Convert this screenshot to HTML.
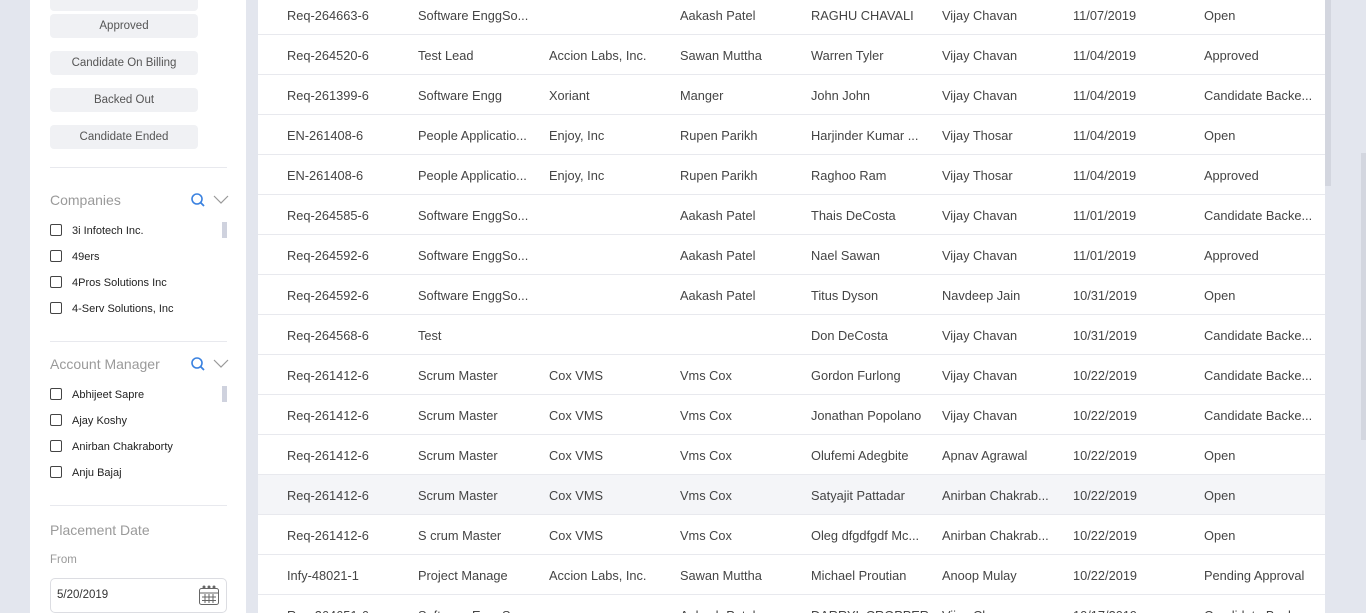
<!DOCTYPE html>
<html style="width:1366px;height:613px;overflow:hidden"><head><style>
*{margin:0;padding:0;box-sizing:border-box}
body{width:1366px;height:613px;overflow:hidden;background:#e3e6ee;font-family:"Liberation Sans",sans-serif;position:relative}
.side{position:absolute;left:30px;top:0;width:216px;height:613px;background:#fff}
.btn{position:absolute;left:20px;width:148px;height:24px;background:#f0f1f4;border-radius:4px;font-size:11.5px;color:#555;text-align:center;line-height:24px}
.hr{position:absolute;left:20px;width:177px;height:1px;background:#e8e9ee}
.h{position:absolute;left:20px;font-size:14px;color:#9a9a9a}
.cb{position:absolute;left:20px;font-size:11px;color:#222;line-height:16px}
.cb i{display:inline-block;width:12px;height:12px;border:1.3px solid #444;border-radius:2px;vertical-align:-2px;margin-right:10px}
.thumb{position:absolute;left:192px;width:5px;height:16px;background:#cfd2de}
.tbl{position:absolute;left:258px;top:0;width:1067px;height:613px;background:#fff;overflow:hidden}
.row{position:absolute;left:0;width:1067px;height:40px;border-bottom:1px solid #e8e9ee;font-size:12.8px;color:#444}
.row span{position:absolute;top:13px;white-space:nowrap}
</style></head><body>
<div class="side">
<div class="btn" style="top:-13px"></div>
<div class="btn" style="top:14px">Approved</div>
<div class="btn" style="top:51px">Candidate On Billing</div>
<div class="btn" style="top:88px">Backed Out</div>
<div class="btn" style="top:125px">Candidate Ended</div>
<div class="hr" style="top:167px"></div>
<div class="h" style="top:192px">Companies</div>
<svg style="position:absolute;left:160px;top:192px" width="40" height="18"><circle cx="7" cy="7" r="5" fill="none" stroke="#3b82e0" stroke-width="1.6"/><line x1="10.5" y1="10.5" x2="14" y2="14" stroke="#3b82e0" stroke-width="1.8"/><polyline points="24,4 31,11 38,4" fill="none" stroke="#999" stroke-width="1.2"/></svg>
<div class="thumb" style="top:222px"></div>
<div class="cb" style="top:223px"><i></i>3i Infotech Inc.</div>
<div class="cb" style="top:249px"><i></i>49ers</div>
<div class="cb" style="top:275px"><i></i>4Pros Solutions Inc</div>
<div class="cb" style="top:301px"><i></i>4-Serv Solutions, Inc</div>
<div class="hr" style="top:341px"></div>
<div class="h" style="top:356px">Account Manager</div>
<svg style="position:absolute;left:160px;top:356px" width="40" height="18"><circle cx="7" cy="7" r="5" fill="none" stroke="#3b82e0" stroke-width="1.6"/><line x1="10.5" y1="10.5" x2="14" y2="14" stroke="#3b82e0" stroke-width="1.8"/><polyline points="24,4 31,11 38,4" fill="none" stroke="#999" stroke-width="1.2"/></svg>
<div class="thumb" style="top:386px"></div>
<div class="cb" style="top:387px"><i></i>Abhijeet Sapre</div>
<div class="cb" style="top:413px"><i></i>Ajay Koshy</div>
<div class="cb" style="top:439px"><i></i>Anirban Chakraborty</div>
<div class="cb" style="top:465px"><i></i>Anju Bajaj</div>
<div class="hr" style="top:505px"></div>
<div class="h" style="top:522px">Placement Date</div>
<div style="position:absolute;left:20px;top:554px;font-size:11.5px;color:#999">From</div>
<div style="position:absolute;left:20px;top:578px;width:177px;height:35px;border:1px solid #dcdde2;border-radius:5px;font-size:11.5px;color:#333;padding:10px 0 0 6px">5/20/2019
<svg style="position:absolute;right:6px;top:5px" width="22" height="22"><rect x="1.5" y="4.5" width="19" height="16" rx="2" fill="none" stroke="#666"/><line x1="1.5" y1="9" x2="20.5" y2="9" stroke="#666"/><g fill="#666"><circle cx="6" cy="3" r="1.5"/><circle cx="11" cy="3" r="1.5"/><circle cx="16" cy="3" r="1.5"/></g><g stroke="#666"><line x1="4" y1="13" x2="18" y2="13"/><line x1="4" y1="16.5" x2="18" y2="16.5"/><line x1="7" y1="10" x2="7" y2="19"/><line x1="11" y1="10" x2="11" y2="19"/><line x1="15" y1="10" x2="15" y2="19"/></g></svg></div>
</div>
<div class="tbl" id="t"></div>
<div style="position:absolute;left:1325px;top:0;width:6px;height:613px;background:#e3e6ee"></div>
<div style="position:absolute;left:1325px;top:0;width:6px;height:186px;background:#d3d6df"></div>
<div style="position:absolute;left:1361px;top:153px;width:5px;height:287px;background:#d3d6df"></div>
<script>
var d=[["Req-264663-6","Software EnggSo...","","Aakash Patel","RAGHU CHAVALI","Vijay Chavan","11/07/2019","Open"],
["Req-264520-6","Test Lead","Accion Labs, Inc.","Sawan Muttha","Warren Tyler","Vijay Chavan","11/04/2019","Approved"],
["Req-261399-6","Software Engg","Xoriant","Manger","John John","Vijay Chavan","11/04/2019","Candidate Backe..."],
["EN-261408-6","People Applicatio...","Enjoy, Inc","Rupen Parikh","Harjinder Kumar ...","Vijay Thosar","11/04/2019","Open"],
["EN-261408-6","People Applicatio...","Enjoy, Inc","Rupen Parikh","Raghoo Ram","Vijay Thosar","11/04/2019","Approved"],
["Req-264585-6","Software EnggSo...","","Aakash Patel","Thais DeCosta","Vijay Chavan","11/01/2019","Candidate Backe..."],
["Req-264592-6","Software EnggSo...","","Aakash Patel","Nael Sawan","Vijay Chavan","11/01/2019","Approved"],
["Req-264592-6","Software EnggSo...","","Aakash Patel","Titus Dyson","Navdeep Jain","10/31/2019","Open"],
["Req-264568-6","Test","","","Don DeCosta","Vijay Chavan","10/31/2019","Candidate Backe..."],
["Req-261412-6","Scrum Master","Cox VMS","Vms Cox","Gordon Furlong","Vijay Chavan","10/22/2019","Candidate Backe..."],
["Req-261412-6","Scrum Master","Cox VMS","Vms Cox","Jonathan Popolano","Vijay Chavan","10/22/2019","Candidate Backe..."],
["Req-261412-6","Scrum Master","Cox VMS","Vms Cox","Olufemi Adegbite","Apnav Agrawal","10/22/2019","Open"],
["Req-261412-6","Scrum Master","Cox VMS","Vms Cox","Satyajit Pattadar","Anirban Chakrab...","10/22/2019","Open"],
["Req-261412-6","S crum Master","Cox VMS","Vms Cox","Oleg dfgdfgdf Mc...","Anirban Chakrab...","10/22/2019","Open"],
["Infy-48021-1","Project Manage","Accion Labs, Inc.","Sawan Muttha","Michael Proutian","Anoop Mulay","10/22/2019","Pending Approval"],
["Req-264651-6","Software EnggSo...","","Aakash Patel","DARRYL CROPPER","Vijay Chavan","10/17/2019","Candidate Backe..."]];
var h="";d.forEach(function(r,i){h+='<div class="row" style="top:'+(-5+40*i)+'px;'+(i==12?'background:#f4f5f8':'')+'">';r.forEach(function(c,j){h+='<span style="left:'+(29+131*j)+'px">'+c+'</span>'});h+='</div>'});
document.getElementById("t").innerHTML=h;
</script>
</body></html>
